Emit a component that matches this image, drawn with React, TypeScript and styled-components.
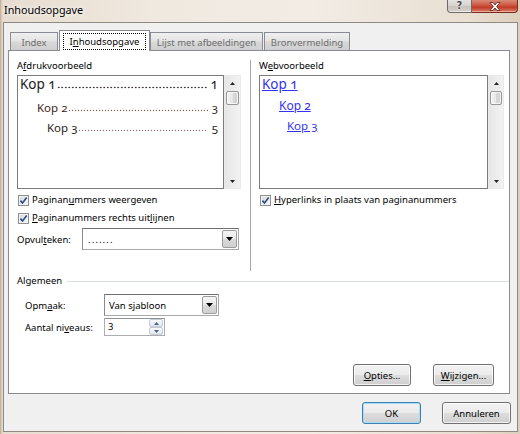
import React from "react";
import styled, { createGlobalStyle, css } from "styled-components";

const UI_FONT = `"Noto Sans", "Open Sans", "DejaVu Sans", sans-serif`;

const GlobalStyle = createGlobalStyle`
  * { box-sizing: border-box; }
  html, body { margin: 0; padding: 0; }
  body {
    font-family: ${UI_FONT};
    font-size: 9.5px;
    color: #000;
    background: #e8dccd;
  }
`;

/* ---------- window frame ---------- */

const Window = styled.div`
  width: 520px;
  height: 434px;
  overflow: hidden;
  display: flex;
  flex-direction: column;
  padding: 0 2px 2px 3px;
  background: linear-gradient(
    to right,
    #b3a18a 0px,
    #d6c6b3 1px,
    #e7dccf 3px,
    #f0e9e0 30%,
    #f2ece5 60%,
    #e9dfd2 90%,
    #ddcfbd 100%
  );
`;

const TitleBar = styled.div`
  flex: none;
  height: 22px;
  display: flex;
  align-items: flex-start;
`;

const TitleText = styled.div`
  margin: 2px 0 0 1px;
  font-size: 10.75px;
  line-height: 16px;
  text-shadow: 0 0 4px rgba(255, 255, 255, 0.95), 0 0 8px rgba(255, 255, 255, 0.8);
`;

const CaptionButtons = styled.div`
  margin-left: auto;
  display: flex;
  height: 13px;
`;

const CaptionButton = styled.div<{ $variant: "help" | "close" }>`
  height: 13px;
  display: flex;
  align-items: flex-end;
  justify-content: center;
  padding-bottom: 1px;
  border-style: solid;
  border-width: 0 1px 1px 1px;
  ${(p) =>
    p.$variant === "close"
      ? css`
          width: 46px;
          border-color: #7a2a1e;
          border-left-width: 0;
          border-radius: 0 0 4px 0;
          background: linear-gradient(#d98a78, #cf5c47 40%, #c13a25 60%, #d98270);
          box-shadow: inset 0 -1px 0 rgba(255, 200, 180, 0.6);
        `
      : css`
          width: 25px;
          border-color: #6f6a66;
          border-radius: 0 0 0 4px;
          background: linear-gradient(#e6e3df, #d7d3ce 45%, #c8c3bd 55%, #d6d1cb);
          box-shadow: inset 0 -1px 0 rgba(255, 255, 255, 0.6);
        `}
`;

const HelpGlyph = styled.span`
  font-family: "DejaVu Sans", sans-serif;
  font-weight: bold;
  font-size: 10px;
  line-height: 11px;
  color: #4a4a4a;
  text-shadow: 0 0 2px #fff, 0 0 1px #fff;
`;

/* ---------- client ---------- */

const Client = styled.div`
  flex: 1;
  display: flex;
  flex-direction: column;
  background: #f0f0f0;
  border: 1px solid #8e8983;
  padding: 7px 7px 7px 4px;
`;

const TabStrip = styled.div`
  flex: none;
  height: 20px;
  display: flex;
  align-items: flex-end;
  padding-left: 2px;
  position: relative;
  z-index: 1;
`;

const Tab = styled.div<{ $width: number; $active?: boolean }>`
  width: ${(p) => p.$width}px;
  border: 1px solid #898c95;
  border-bottom: none;
  text-align: center;
  white-space: nowrap;
  ${(p) =>
    p.$active
      ? css`
          height: 21px;
          margin-bottom: -1px;
          background: #fff;
          padding: 2px 3px 0;
          color: #000;
        `
      : css`
          height: 18px;
          background: linear-gradient(#f0f0f0, #e4e4e4 45%, #d8d8d8 55%, #cfcfcf);
          padding-top: 2px;
          line-height: 15px;
          color: #6e6e6e;
          margin-right: 1px;
        `}
`;

const FocusRect = styled.span`
  display: block;
  height: 17px;
  line-height: 15px;
  border: 1px dotted #000;
`;

const Panel = styled.div`
  flex: 1;
  background: #fff;
  border: 1px solid #898c95;
  display: flex;
  flex-direction: column;
  padding: 7px 5px 7px 8px;
`;

const TopSection = styled.div`
  display: flex;
  height: 213px;
`;

const Column = styled.div<{ $width: number }>`
  width: ${(p) => p.$width}px;
  display: flex;
  flex-direction: column;
`;

const Separator = styled.div`
  width: 2px;
  margin: 2px 7px 0 9px;
  border-left: 1px solid #a8a8a8;
  border-right: 1px solid #fff;
`;

const Label = styled.div`
  line-height: 16px;
  height: 16px;
  margin-bottom: 1px;
  white-space: nowrap;
`;

const Key = styled.span`
  text-decoration: underline;
  text-underline-offset: 1px;
`;

/* ---------- preview boxes ---------- */

const PreviewBox = styled.div`
  height: 114px;
  display: flex;
`;

const Pane = styled.div`
  flex: 1;
  border: 1px solid #7c7c7c;
  background: #fff;
  padding: 0 5px 0 2px;
  overflow: hidden;
`;

const ScrollBar = styled.div<{ $width: number }>`
  width: ${(p) => p.$width}px;
  display: flex;
  flex-direction: column;
  align-items: center;
  background: linear-gradient(to right, #e6e6e6, #f2f2f2);
  border: 1px solid #eaeaea;
`;

const ScrollArrow = styled.div<{ $bottom?: boolean }>`
  height: 14px;
  width: 100%;
  display: flex;
  align-items: center;
  justify-content: center;
  ${(p) => p.$bottom && "margin-top: auto;"}
`;

const Thumb = styled.div`
  width: calc(100% - 2px);
  height: 14px;
  margin-top: 1px;
  border: 1px solid #979797;
  border-radius: 2px;
  background: linear-gradient(to right, #f4f4f4, #e7e7e7 50%, #d9d9d9 51%, #d2d2d2);
  box-shadow: inset 0 0 0 1px rgba(255, 255, 255, 0.7);
`;

const PrintLine = styled.div<{ $size: number; $lh: number; $indent: number; $mt: number; $color: string }>`
  display: flex;
  align-items: baseline;
  white-space: nowrap;
  font-size: ${(p) => p.$size}px;
  line-height: ${(p) => p.$lh}px;
  padding-left: ${(p) => p.$indent}px;
  margin-top: ${(p) => p.$mt}px;
  color: ${(p) => p.$color};
  font-variant-numeric: oldstyle-nums;
`;

/* dotted tab leader, drawn as a repeating dot pattern sitting on the baseline */
const Leader = styled.span<{ $color: string; $step: number; $r: number }>`
  flex: 1;
  height: 3px;
  margin: 0 4px 0 1px;
  background-image: radial-gradient(
    circle at 50% 50%,
    ${(p) => p.$color} ${(p) => p.$r}px,
    transparent ${(p) => p.$r + 0.55}px
  );
  background-size: ${(p) => p.$step}px 3px;
  background-repeat: repeat-x;
  background-position: left bottom;
`;

const WebLine = styled.div<{ $size: number; $lh: number; $indent: number; $mt: number }>`
  font-size: ${(p) => p.$size}px;
  line-height: ${(p) => p.$lh}px;
  padding-left: ${(p) => p.$indent}px;
  margin-top: ${(p) => p.$mt}px;
  white-space: nowrap;
  font-variant-numeric: oldstyle-nums;
`;

const WebLink = styled.span`
  color: #3232f6;
  text-decoration: underline;
  text-underline-offset: 1px;
`;

/* ---------- checkbox ---------- */

const CheckRow = styled.div<{ $mt: number }>`
  display: flex;
  align-items: flex-start;
  height: 17px;
  line-height: 15px;
  padding-top: 1px;
  margin-top: ${(p) => p.$mt}px;
  white-space: nowrap;
`;

const CheckBox = styled.span`
  flex: none;
  width: 11px;
  height: 11px;
  margin: 3px 3px 0 1px;
  border: 1px solid #8e8f8f;
  background: linear-gradient(135deg, #d7d7d7, #f9f9f9);
  box-shadow: inset 0 0 0 1px #f3f3f3;
  display: flex;
  align-items: center;
  justify-content: center;
`;

/* ---------- combo / spin ---------- */

const FieldRow = styled.div<{ $mt: number; $pl?: number }>`
  display: flex;
  align-items: center;
  margin-top: ${(p) => p.$mt}px;
  padding-left: ${(p) => p.$pl ?? 0}px;
  white-space: nowrap;
`;

const FieldLabel = styled.span<{ $width: number }>`
  width: ${(p) => p.$width}px;
  line-height: 15px;
  flex: none;
`;

const Combo = styled.div<{ $width: number }>`
  width: ${(p) => p.$width}px;
  height: 22px;
  display: flex;
  border: 1px solid #7a7a7a;
  border-color: #6f6f6f #a9a9a9 #a9a9a9 #8a8a8a;
  background: #fff;
`;

const ComboValue = styled.span<{ $spaced?: boolean }>`
  flex: 1;
  display: flex;
  align-items: center;
  padding-left: 4px;
  line-height: 15px;
  ${(p) => p.$spaced && "letter-spacing: 1.1px; padding-left: 5px;"}
`;

const ComboButton = styled.span`
  width: 15px;
  margin: 1px;
  border: 1px solid #9c9c9c;
  border-radius: 2px;
  background: linear-gradient(#f5f5f5, #e9e9e9 48%, #dadada 52%, #d0d0d0);
  display: flex;
  align-items: center;
  justify-content: center;
`;

const Spin = styled.div`
  width: 61px;
  height: 18px;
  display: flex;
  border: 1px solid #abadb3;
  border-top-color: #8f939b;
  background: #fff;
`;

const SpinValue = styled.span`
  flex: 1;
  padding-left: 3px;
  line-height: 15px;
`;

const SpinButtons = styled.div`
  width: 14px;
  margin: 0 1px 0 0;
  display: flex;
  flex-direction: column;
`;

const SpinButton = styled.span`
  flex: 1;
  border: 1px solid #c4cbd4;
  border-radius: 2px;
  background: linear-gradient(#f7f9fb, #e2e8ef);
  display: flex;
  align-items: center;
  justify-content: center;
`;

/* ---------- group ---------- */

const GroupHeader = styled.div`
  display: flex;
  align-items: center;
  height: 16px;
  line-height: 16px;
  margin-top: 2px;
`;

const GroupRule = styled.span`
  flex: 1;
  height: 1px;
  margin: 0 -5px 0 5px;
  background: #d5dfe5;
`;

/* ---------- buttons ---------- */

const ButtonRow = styled.div<{ $gap: number; $pr?: number; $mr?: number; $mt?: string }>`
  display: flex;
  justify-content: flex-end;
  gap: ${(p) => p.$gap}px;
  padding-right: ${(p) => p.$pr ?? 0}px;
  margin-right: ${(p) => p.$mr ?? 0}px;
  margin-top: ${(p) => p.$mt ?? "0"};
  flex: none;
`;

const Button = styled.button<{ $width: number; $default?: boolean }>`
  width: ${(p) => p.$width}px;
  height: 22px;
  padding: 0;
  font: inherit;
  line-height: 15px;
  color: #000;
  border: 1px solid #707070;
  border-radius: 3px;
  background: linear-gradient(#f2f2f2 0%, #ebebeb 48%, #dddddd 52%, #cfcfcf 100%);
  box-shadow: inset 0 0 0 1px rgba(255, 255, 255, 0.75);
  ${(p) =>
    p.$default &&
    css`
      border-color: #3c7fb1;
      box-shadow: inset 0 0 0 1px #a9dcf7;
    `}
`;

/* ---------- icons ---------- */

const Triangle = ({ up, w = 7, h = 4, color = "#000" }: { up?: boolean; w?: number; h?: number; color?: string }) => (
  <svg width={w} height={h} viewBox={`0 0 ${w} ${h}`}>
    <path d={up ? `M0 ${h} L${w / 2} 0 L${w} ${h} Z` : `M0 0 L${w} 0 L${w / 2} ${h} Z`} fill={color} />
  </svg>
);

const CheckMark = () => (
  <svg width="9" height="9" viewBox="0 0 9 9">
    <path d="M1.4 4.6 L3.5 7 L7.7 1.6" fill="none" stroke="#2b4a88" strokeWidth="1.6" />
  </svg>
);

const CloseX = () => (
  <svg width="12" height="9" viewBox="0 0 12 9">
    <path
      d="M1 0.5 H4 L6 3 L8 0.5 H11 L7.6 4.5 L11 8.5 H8 L6 6 L4 8.5 H1 L4.4 4.5 Z"
      fill="#fff"
      stroke="#5a1d14"
      strokeWidth="0.8"
      strokeLinejoin="round"
    />
  </svg>
);

/* ---------- data ---------- */

const printLines = [
  { text: "Kop 1", page: "1", size: 13.5, lh: 16, indent: 0, mt: 0, color: "#1c1a1a", leader: "#3a3232", step: 3.5, r: 0.6 },
  { text: "Kop 2", page: "3", size: 11.5, lh: 20, indent: 17, mt: 6, color: "#40261a", leader: "#86604f", step: 3.0, r: 0.5 },
  { text: "Kop 3", page: "5", size: 11.5, lh: 20, indent: 27, mt: 0, color: "#2c1c15", leader: "#8a7066", step: 3.0, r: 0.5 },
];

const webLines = [
  { text: "Kop 1", size: 13.5, lh: 16, indent: 0, mt: 0 },
  { text: "Kop 2", size: 12, lh: 20, indent: 17, mt: 4 },
  { text: "Kop 3", size: 11.5, lh: 20, indent: 25, mt: 0 },
];

const Scroll = ({ width }: { width: number }) => (
  <ScrollBar $width={width}>
    <ScrollArrow>
      <Triangle up w={5} h={3} color="#222" />
    </ScrollArrow>
    <Thumb />
    <ScrollArrow $bottom>
      <Triangle w={5} h={3} color="#222" />
    </ScrollArrow>
  </ScrollBar>
);

const Check = ({ children, mt }: { children: React.ReactNode; mt: number }) => (
  <CheckRow $mt={mt}>
    <CheckBox>
      <CheckMark />
    </CheckBox>
    <span>{children}</span>
  </CheckRow>
);

export default function App() {
  return (
    <>
      <GlobalStyle />
      <Window>
        <TitleBar>
          <TitleText>Inhoudsopgave</TitleText>
          <CaptionButtons>
            <CaptionButton $variant="help">
              <HelpGlyph>?</HelpGlyph>
            </CaptionButton>
            <CaptionButton $variant="close">
              <CloseX />
            </CaptionButton>
          </CaptionButtons>
        </TitleBar>

        <Client>
          <TabStrip>
            <Tab $width={48}>Index</Tab>
            <Tab $width={91} $active>
              <FocusRect>
                I<Key>n</Key>houdsopgave
              </FocusRect>
            </Tab>
            <Tab $width={113}>Lijst met afbeeldingen</Tab>
            <Tab $width={86}>Bronvermelding</Tab>
          </TabStrip>

          <Panel>
            <TopSection>
              <Column $width={224}>
                <Label>
                  A<Key>f</Key>drukvoorbeeld
                </Label>
                <PreviewBox>
                  <Pane>
                    {printLines.map((l) => (
                      <PrintLine key={l.text} $size={l.size} $lh={l.lh} $indent={l.indent} $mt={l.mt} $color={l.color}>
                        <span>{l.text}</span>
                        <Leader $color={l.leader} $step={l.step} $r={l.r} />
                        <span>{l.page}</span>
                      </PrintLine>
                    ))}
                  </Pane>
                  <Scroll width={17} />
                </PreviewBox>
                <Check mt={2}>
                  Paginan<Key>u</Key>mmers weergeven
                </Check>
                <Check mt={1}>
                  <Key>P</Key>aginanummers rechts uit<Key>l</Key>ijnen
                </Check>
                <FieldRow $mt={2}>
                  <FieldLabel $width={65}>
                    Opvul<Key>t</Key>eken:
                  </FieldLabel>
                  <Combo $width={157}>
                    <ComboValue $spaced>.......</ComboValue>
                    <ComboButton>
                      <Triangle />
                    </ComboButton>
                  </Combo>
                </FieldRow>
              </Column>

              <Separator />

              <Column $width={245}>
                <Label>
                  W<Key>e</Key>bvoorbeeld
                </Label>
                <PreviewBox>
                  <Pane>
                    {webLines.map((l) => (
                      <WebLine key={l.text} $size={l.size} $lh={l.lh} $indent={l.indent} $mt={l.mt}>
                        <WebLink>{l.text}</WebLink>
                      </WebLine>
                    ))}
                  </Pane>
                  <Scroll width={16} />
                </PreviewBox>
                <Check mt={2}>
                  <Key>H</Key>yperlinks in plaats van paginanummers
                </Check>
              </Column>
            </TopSection>

            <GroupHeader>
              <span>Algemeen</span>
              <GroupRule />
            </GroupHeader>
            <FieldRow $mt={5} $pl={8}>
              <FieldLabel $width={79}>
                Opm<Key>a</Key>ak:
              </FieldLabel>
              <Combo $width={115}>
                <ComboValue>Van sjabloon</ComboValue>
                <ComboButton>
                  <Triangle />
                </ComboButton>
              </Combo>
            </FieldRow>
            <FieldRow $mt={2} $pl={8}>
              <FieldLabel $width={79}>
                Aantal ni<Key>v</Key>eaus:
              </FieldLabel>
              <Spin>
                <SpinValue>3</SpinValue>
                <SpinButtons>
                  <SpinButton>
                    <Triangle up w={5} h={3} color="#4d6286" />
                  </SpinButton>
                  <SpinButton>
                    <Triangle w={5} h={3} color="#4d6286" />
                  </SpinButton>
                </SpinButtons>
              </Spin>
            </FieldRow>

            <ButtonRow $gap={22} $pr={10} $mt="auto">
              <Button $width={58}>
                <Key>O</Key>pties...
              </Button>
              <Button $width={61}>
                <Key>W</Key>ijzigen...
              </Button>
            </ButtonRow>
          </Panel>

          <ButtonRow $gap={21} $mr={-1} $mt="8px">
            <Button $width={59} $default>
              OK
            </Button>
            <Button $width={69}>Annuleren</Button>
          </ButtonRow>
        </Client>
      </Window>
    </>
  );
}
